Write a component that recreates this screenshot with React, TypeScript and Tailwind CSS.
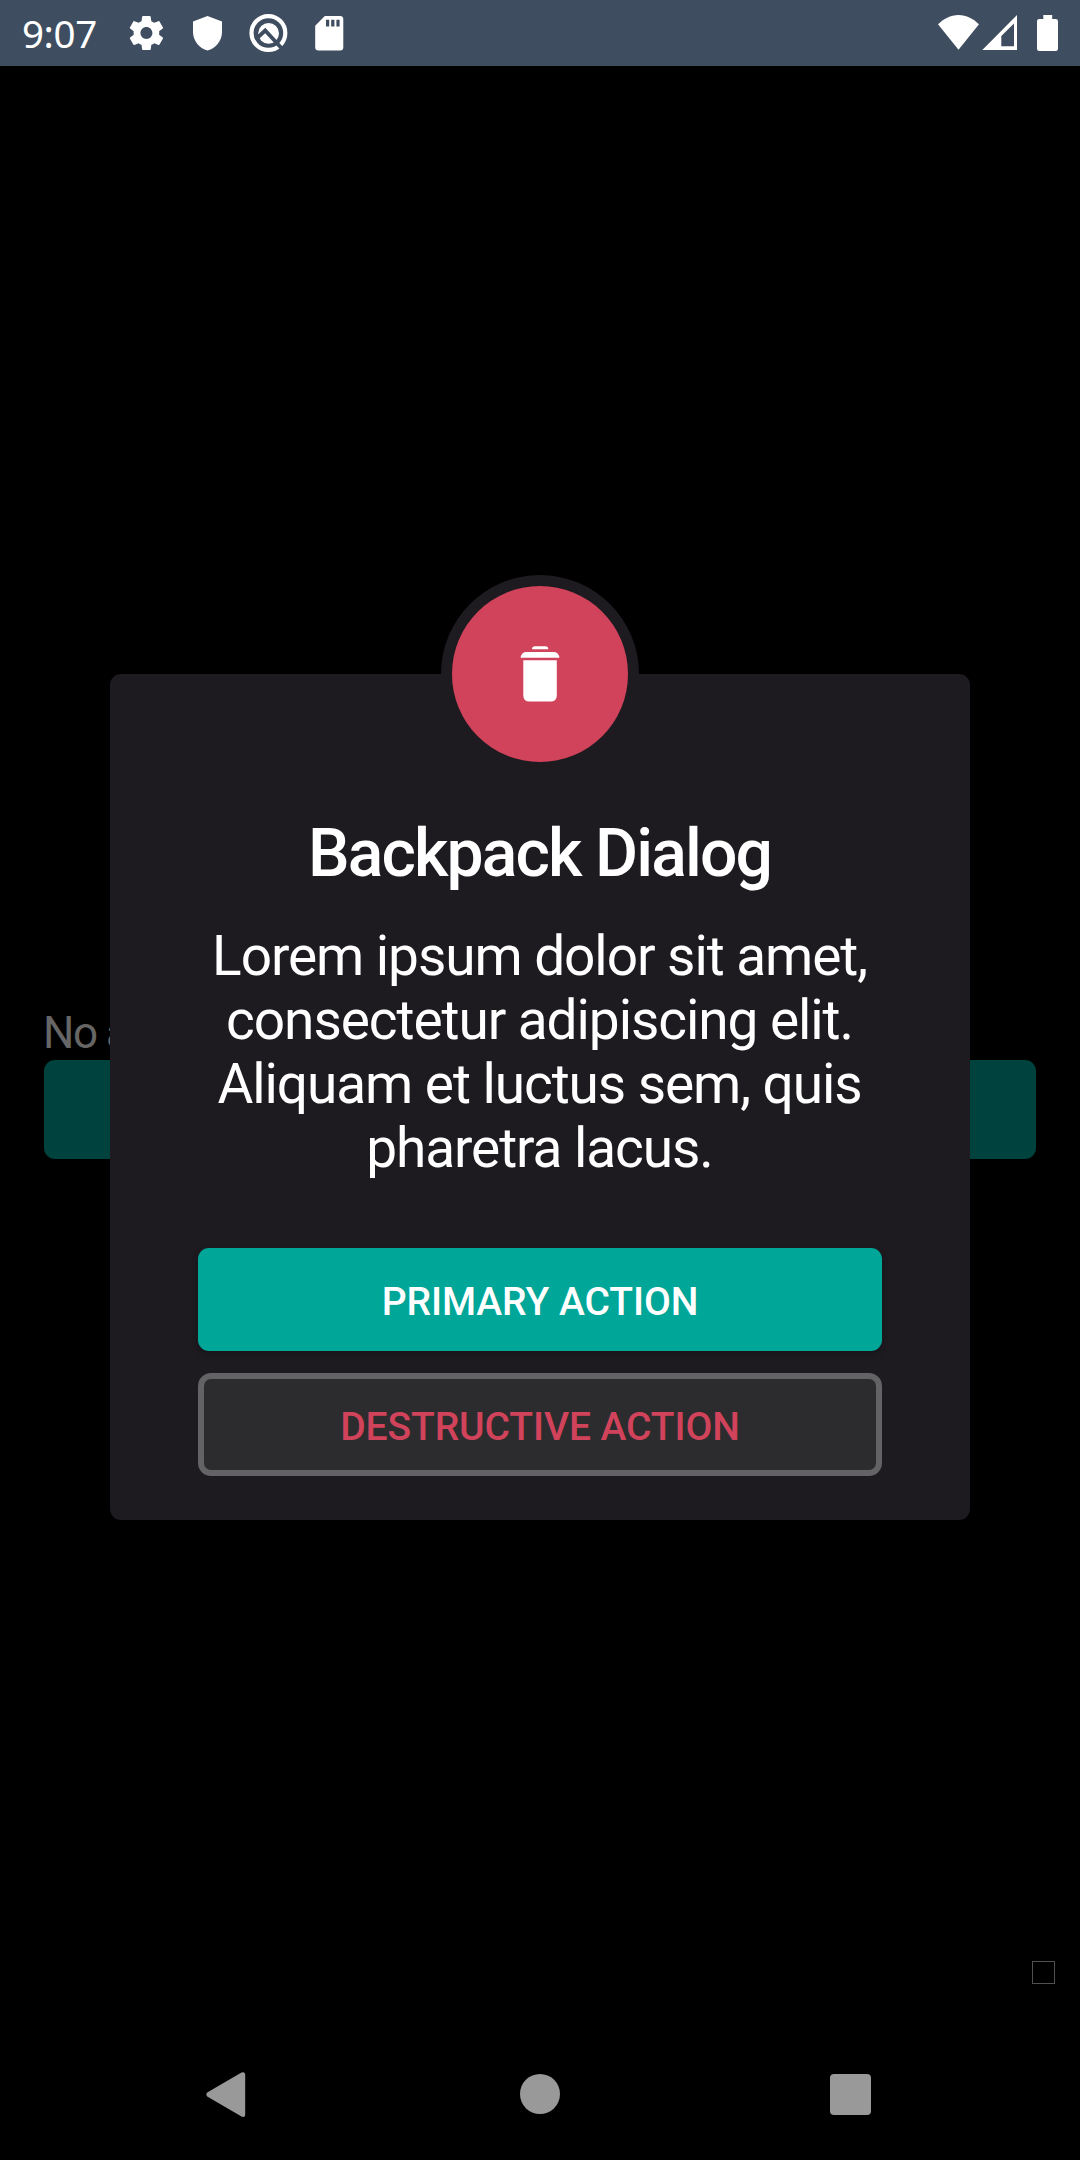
import React from "react";

function StatusBar() {
  return (
    <header className="flex h-[66px] w-full shrink-0 items-center bg-[#3f4d60] text-white">
      <span className="ml-[22px] w-[104px] font-['Noto_Sans',sans-serif] text-[38.5px] leading-[66px] tracking-[-0.4px]">9:07</span>
      <svg className="h-[66px] w-[230px] shrink-0" viewBox="126 0 230 66" fill="currentColor">
        <path
          transform="translate(125.9 12.5) scale(1.71)"
          d="M19.43 12.98c.04-.32.07-.64.07-.98s-.03-.66-.07-.98l2.11-1.65c.19-.15.24-.42.12-.64l-2-3.46c-.12-.22-.39-.3-.61-.22l-2.49 1c-.52-.4-1.08-.73-1.69-.98l-.38-2.65C14.46 2.18 14.25 2 14 2h-4c-.25 0-.46.18-.49.42l-.38 2.65c-.61.25-1.17.59-1.69.98l-2.49-1c-.23-.09-.49 0-.61.22l-2 3.46c-.13.22-.07.49.12.64l2.11 1.65c-.04.32-.07.65-.07.98s.03.66.07.98l-2.11 1.65c-.19.15-.24.42-.12.64l2 3.46c.12.22.39.3.61.22l2.49-1c.52.4 1.08.73 1.69.98l.38 2.65c.03.24.24.42.49.42h4c.25 0 .46-.18.49-.42l.38-2.65c.61-.25 1.17-.59 1.69-.98l2.49 1c.23.09.49 0 .61-.22l2-3.46c.12-.22.07-.49-.12-.64l-2.11-1.65zM12 15.5c-1.93 0-3.5-1.57-3.5-3.5s1.57-3.5 3.5-3.5 3.5 1.57 3.500 3.500-1.570 3.500-3.500 3.500z"
        />
        <path d="M207.500 16 193 21.600V32c0 8.600 6.200 16.400 14.500 18.600C215.800 48.400 222 40.600 222 32V21.600z" />
        <circle cx="268.400" cy="33" r="16.900" fill="none" stroke="currentColor" strokeWidth="4.200" />
        <circle cx="268.600" cy="33.300" r="10.400" />
        <path d="M255.500 39.500 265.200 30.500 283 49.800" fill="none" stroke="#3f4d60" strokeWidth="3.800" />
        <path d="M324.800 16H340a3.300 3.300 0 0 1 3.300 3.300v28a3.300 3.300 0 0 1-3.300 3.300h-21.500a3.300 3.300 0 0 1-3.300-3.300V25.800zM326 19.700v6.800h3.200v-6.800zm5.200 0v6.800h3.200v-6.800zm5.200 0v6.800h3.200v-6.800z" fillRule="evenodd" />
      </svg>
      <svg className="ml-auto h-[66px] w-[150px] shrink-0" viewBox="930 0 150 66" fill="currentColor">
        <path d="M938 24.300C943.500 19 950.500 15 958.500 15s15 4 20.500 9.300L958.500 49.700z" />
        <path d="M1017 15v35h-34.700zM1014 23.500 1001.300 36v10.300H1014z" fillRule="evenodd" />
        <path d="M1043.300 15h8.900v4h3.500a2.300 2.300 0 0 1 2.300 2.300v27.400a2.300 2.300 0 0 1-2.300 2.300h-16.400a2.300 2.300 0 0 1-2.300-2.300V21.300a2.300 2.300 0 0 1 2.300-2.300h4z" />
      </svg>
    </header>
  );
}

function NavigationBar() {
  return (
    <nav className="flex h-[132px] shrink-0 items-center justify-between px-[205px] text-[#999999]">
      <svg className="h-[48px] w-[42px]" viewBox="205 2070 42 48" fill="currentColor">
        <path d="M207.200 2092.600 241.500 2072.600q3.700-1.500 3.700 2.200v39.600q0 3.700-3.700 2.200L207.200 2096.400q-1.700-1.900 0-3.800z" />
      </svg>
      <div className="ml-[3px] size-[40px] rounded-full bg-current" />
      <div className="mr-[4px] size-[41px] rounded-[4px] bg-current" />
    </nav>
  );
}

function Dialog() {
  return (
    <section className="relative flex h-[846px] w-[860px] flex-col items-center rounded-[11px] bg-[#1e1b20] px-[88px] pt-[142px] text-white">
      <div className="absolute left-1/2 top-[-99px] flex size-[198px] -translate-x-1/2 items-center justify-center rounded-full bg-[#1e1b20]">
        <div className="flex size-[176px] items-center justify-center rounded-full bg-[#d1435b]">
          <svg className="h-[56px] w-[40px]" viewBox="520 646 40 56" fill="currentColor">
            <path d="M532 649.300q0-3 3-3h10.300q3 0 3 3z" />
            <path d="M520.500 657.700q.8-5.700 6.200-5.700h26.600q5.400 0 6.200 5.700z" />
            <path d="M523.300 660.300h33.500v35q0 6.300-6.300 6.300h-20.900q-6.300 0-6.300-6.300z" />
          </svg>
        </div>
      </div>
      <h1 className="h-[76px] whitespace-nowrap pr-[1px] text-[66px] font-medium leading-[76px] tracking-[-1.880px]">Backpack Dialog</h1>
      <p className="mt-[32px] whitespace-nowrap pr-[1px] text-center text-[55px] leading-[64px] tracking-[-1.080px]">
        Lorem ipsum dolor sit amet,
        <br />
        consectetur adipiscing elit.
        <br />
        Aliquam et luctus sem, quis
        <br />
        pharetra lacus.
      </p>
      <button className="mt-[68px] h-[103px] w-full shrink-0 rounded-[11px] bg-[#00a698] pt-[6px] text-[39px] font-medium tracking-[-0.080px] shadow-[0_3px_6px_rgba(0,0,0,0.25)]">
        PRIMARY ACTION
      </button>
      <button className="mt-[22px] h-[103px] w-full shrink-0 rounded-[13px] border-[6px] border-[#636366] bg-[#2c2c2e] pt-[6px] text-[39px] font-medium tracking-[-0.100px] text-[#d1435b]">
        DESTRUCTIVE ACTION
      </button>
    </section>
  );
}

export default function App() {
  return (
    <div className="relative flex h-[2160px] w-[1080px] flex-col overflow-hidden bg-black font-['Roboto',sans-serif]">
      <StatusBar />
      <main className="flex flex-1 flex-col px-[44px] pt-[940px]">
        <div className="ml-[-1px] h-[54px] whitespace-nowrap text-[44px] leading-[55px] tracking-[-1.500px] text-[#666666]">No a</div>
        <div className="h-[99px] rounded-[11px] bg-[#00423d]" />
        <div className="ml-auto mr-[-19px] mt-[802px] size-[23px] border border-[#505050]" />
      </main>
      <NavigationBar />
      <div className="absolute inset-x-0 top-[674px] flex justify-center">
        <Dialog />
      </div>
    </div>
  );
}
